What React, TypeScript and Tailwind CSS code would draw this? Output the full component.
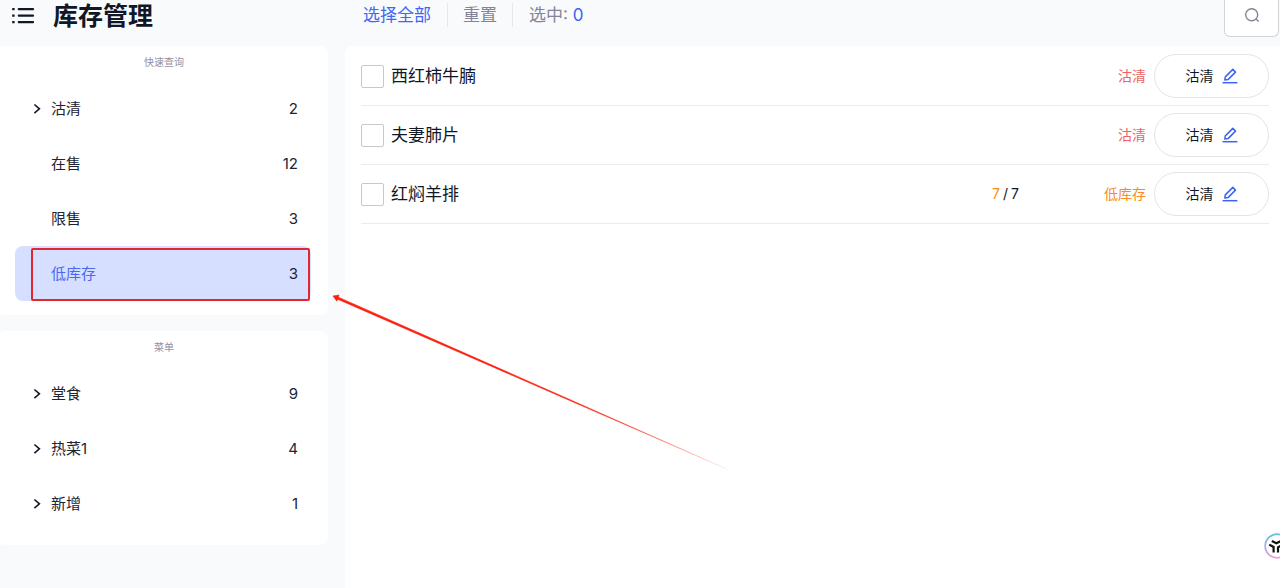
import React from 'react';

const quickFilters = [
  { name: '沽清', count: 2, expandable: true },
  { name: '在售', count: 12, expandable: false },
  { name: '限售', count: 3, expandable: false },
  { name: '低库存', count: 3, expandable: false },
];

const menus = [
  { name: '堂食', count: 9, expandable: true },
  { name: '热菜1', count: 4, expandable: true },
  { name: '新增', count: 1, expandable: true },
];

const dishes = [
  { name: '西红柿牛腩', status: '沽清', low: false },
  { name: '夫妻肺片', status: '沽清', low: false },
  { name: '红焖羊排', status: '低库存', low: true, left: 7, total: 7 },
];

type Filter = { name: string; count: number; expandable: boolean };

const ListIcon = () => (
  <svg width="24" height="18" viewBox="0 0 24 18" fill="none" stroke="#101828" strokeWidth="2.2">
    <path d="M7.8 2.2H22M7.8 8.7H22M7.8 15.2H22" strokeLinecap="round" />
    <path d="M1.2 2.2H3.6M1.2 8.7H3.6M1.2 15.2H3.6" />
  </svg>
);

const SearchIcon = () => (
  <svg width="16" height="16" viewBox="0 0 16 16" fill="none" stroke="#858398" strokeWidth="1.4">
    <circle cx="7.7" cy="7.7" r="6" />
    <path d="M12 12L14.6 14.6" />
  </svg>
);

const PencilIcon = () => (
  <svg width="16" height="16" viewBox="0 0 16 16" fill="none" stroke="#3D63F5" strokeWidth="1.5" strokeLinejoin="round">
    <path d="M2.8 12L3.3 8.9L10.8 1.4L13.5 4.1L6 11.6Z" />
    <path d="M0.6 14.7H15.4" />
  </svg>
);

const ChevronIcon = () => (
  <svg width="8" height="12" viewBox="0 0 8 12" fill="none" stroke="#101828" strokeWidth="1.6">
    <path d="M1.4 1.5L6.4 5.8L1.4 10.1" />
  </svg>
);

const FilterCard: React.FC<{ title: string; items: Filter[]; active?: string; onSelect: (name: string) => void }> = ({
  title,
  items,
  active,
  onSelect,
}) => (
  <section className="bg-white rounded-r-lg rounded-l-sm pb-[14px]">
    <h2 className="h-[35px] pt-2 text-[10px] leading-4 text-center text-[#918fa3]">{title}</h2>
    <ul className="pl-[15px] pr-[17px]">
      {items.map((item) => (
        <li key={item.name}>
          <button
            onClick={() => onSelect(item.name)}
            className={
              item.name === active
                ? 'relative w-full h-[55px] pl-[18px] pr-[13px] flex items-center text-[15px] leading-[25px] rounded-lg bg-[#d6dfff] text-[#4a68f0]'
                : 'relative w-full h-[55px] pl-[18px] pr-[13px] flex items-center text-[15px] leading-[25px] text-[#1d2433]'
            }
          >
            <span className="w-[18px] flex">{item.expandable && <ChevronIcon />}</span>
            <span>{item.name}</span>
            <span className="ml-auto text-[#1d2433]">{item.count}</span>
            {item.name === active && (
              <span className="absolute left-4 right-px top-0.5 bottom-0 border-2 border-[#e0282e] rounded-xs" />
            )}
          </button>
        </li>
      ))}
    </ul>
  </section>
);

export default function App() {
  const [active, setActive] = React.useState('低库存');
  const [selected, setSelected] = React.useState<string[]>([]);

  const toggle = (name: string) =>
    setSelected((prev) => (prev.includes(name) ? prev.filter((n) => n !== name) : [...prev, name]));

  return (
    <div className="relative min-h-screen flex flex-col overflow-hidden bg-[#f8fafc] font-['Inter','Noto_Sans_CJK_SC',sans-serif] text-[#101828]">
      {/* Top bar */}
      <header className="h-[46px] flex items-start">
        <div className="w-[363px] h-8 pl-[11px] flex shrink-0 items-center gap-[18px]">
          <button aria-label="菜单列表">
            <ListIcon />
          </button>
          <h1 className="text-[25px] leading-8 font-bold">库存管理</h1>
        </div>
        <div className="h-[30px] flex items-center text-[17px] leading-6 text-[#858398]">
          <button onClick={() => setSelected(dishes.map((d) => d.name))} className="pr-4 text-[#4168f2]">
            选择全部
          </button>
          <button onClick={() => setSelected([])} className="px-[15px] border-x border-[#e5e7eb]">
            重置
          </button>
          <span className="pl-4">
            选中: <span className="text-[#3d63f5]">{selected.length}</span>
          </span>
        </div>
        <button
          aria-label="搜索"
          className="ml-auto mr-px w-[55px] h-[37px] pb-[6px] flex items-center justify-center bg-white border border-t-0 border-[#d4d4d8] rounded-b-md"
        >
          <SearchIcon />
        </button>
      </header>

      <div className="flex-1 flex gap-[17px]">
        <aside className="w-[328px] shrink-0 flex flex-col gap-4">
          <FilterCard title="快速查询" items={quickFilters} active={active} onSelect={setActive} />
          <FilterCard title="菜单" items={menus} active={active} onSelect={setActive} />
        </aside>

        <main className="flex-1 bg-white rounded-tl-lg pt-px pl-4 pr-[11px]">
          <ul>
            {dishes.map((dish) => (
              <li key={dish.name} className="h-[59px] flex items-center border-b border-[#ebebed]">
                <label className="flex items-center gap-[7px] text-[17px] leading-[28px]">
                  <input
                    type="checkbox"
                    checked={selected.includes(dish.name)}
                    onChange={() => toggle(dish.name)}
                    className="appearance-none w-[23px] h-[23px] border border-[#c8c8cc] rounded-xs bg-white checked:bg-[#3d63f5]"
                  />
                  {dish.name}
                </label>
                <div className="ml-auto flex items-center text-sm leading-[22px]">
                  {dish.low && (
                    <span className="flex gap-[3px]">
                      <span className="text-[#fa8c23]">{dish.left}</span>
                      <span>/</span>
                      <span>{dish.total}</span>
                    </span>
                  )}
                  <span className={dish.low ? 'w-[127px] text-right text-[#fa8c23]' : 'w-[127px] text-right text-[#ec6468]'}>
                    {dish.status}
                  </span>
                  <button className="ml-2 w-[115px] h-11 flex items-center justify-center gap-2 border border-[#e4e4e7] rounded-full">
                    沽清
                    <PencilIcon />
                  </button>
                </div>
              </li>
            ))}
          </ul>
        </main>
      </div>

      {/* Pointer to the low stock filter */}
      <svg className="absolute left-[332px] top-[292px] pointer-events-none" width="404" height="182" viewBox="0 0 404 182">
        <defs>
          <linearGradient id="pointer" x1="0" y1="0" x2="1" y2="0">
            <stop offset="0" stopColor="#fb1f0e" />
            <stop offset="0.6" stopColor="#fb1f0e" />
            <stop offset="1" stopColor="#fb1f0e" stopOpacity="0" />
          </linearGradient>
        </defs>
        <path d="M1 4L7 3L6.4 5.2L402 180.2L5.6 7.2L4.8 9.2Z" fill="url(#pointer)" stroke="url(#pointer)" strokeWidth="0.6" />
      </svg>

      {/* Assistant */}
      <button aria-label="助手" className="absolute -right-2.5 bottom-[29px]">
        <svg width="26" height="26" viewBox="0 0 26 26" fill="none">
          <defs>
            <linearGradient id="ring" x1="0" y1="0" x2="0" y2="1">
              <stop offset="0" stopColor="#62c4d8" />
              <stop offset="0.5" stopColor="#a5aee8" />
              <stop offset="1" stopColor="#f49ad6" />
            </linearGradient>
          </defs>
          <circle cx="13" cy="13" r="11.8" fill="#fff" stroke="url(#ring)" strokeWidth="1.8" />
          <path
            d="M7.8 8L12.4 10.2L18 7.4M5.2 11.6L9.6 14V19.4M14 19.6V14.4L19 11.6"
            stroke="#111"
            strokeWidth="2.2"
          />
        </svg>
      </button>
    </div>
  );
}
